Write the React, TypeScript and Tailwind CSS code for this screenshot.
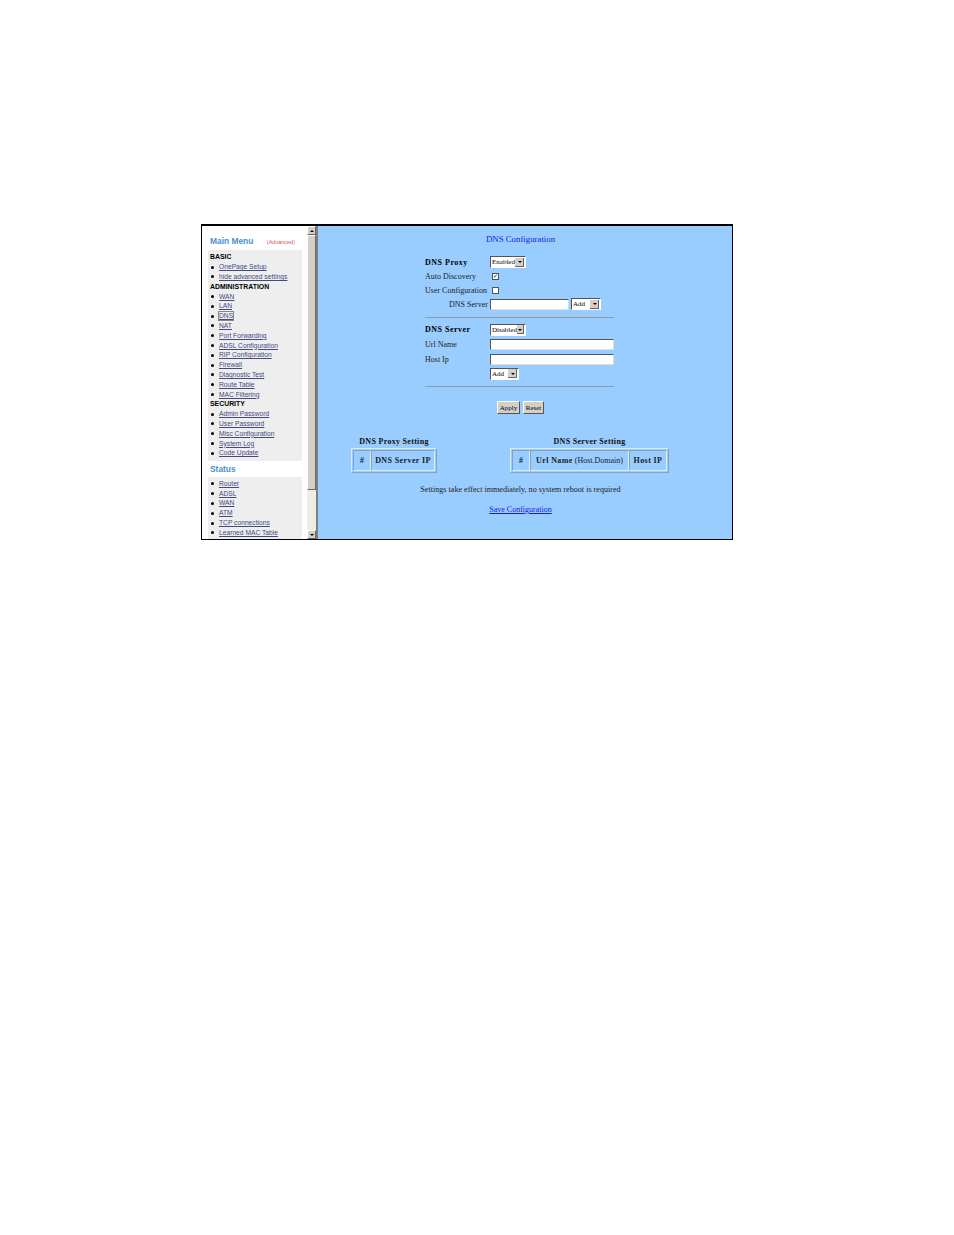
const serif = { fontFamily: '"Liberation Serif", serif' };

const Item = ({ label, boxed }: { label: string; boxed?: boolean }) => (
  <div className="flex h-[9.8px] items-center pl-[1px]">
    <span className="h-[3px] w-[3px] shrink-0 rounded-full bg-black" />
    <a className={`ml-[5px] whitespace-nowrap text-[6.7px] leading-[8px] text-[#44497f] underline ${boxed ? 'outline outline-1 outline-[#888]' : ''}`}>
      {label}
    </a>
  </div>
);

const Heading = ({ label }: { label: string }) => (
  <div className="flex h-[9.8px] items-center text-[6.9px] font-bold leading-[8px] text-black">{label}</div>
);

const Select = ({ label, width }: { label: string; width: string }) => (
  <div className={`flex h-[12px] items-center justify-between border border-t-[#555] border-l-[#555] border-r-white border-b-white bg-white pl-[1px] pr-[1px] ${width}`}>
    <span className="text-[7px] leading-[8px] text-black">{label}</span>
    <span className="flex h-[9px] w-[9px] items-center justify-center bg-[#d4d0c8] shadow-[inset_-1px_-1px_0_#666]">
      <span className="h-0 w-0 border-x-[2px] border-t-[2px] border-x-transparent border-t-black" />
    </span>
  </div>
);

const Input = ({ width }: { width: string }) => (
  <div className={`h-[11px] border border-t-[#555] border-l-[#555] border-r-[#ddd] border-b-[#ddd] bg-white ${width}`} />
);

const Cell = ({ children, width }: { children: React.ReactNode; width: string }) => (
  <div className={`flex h-[21px] items-center justify-center whitespace-nowrap border border-t-[#8aa0b8] border-l-[#8aa0b8] border-r-[#d8ecff] border-b-[#d8ecff] text-[8px] leading-[9px] text-[#222] ${width}`}>
    {children}
  </div>
);

const FormRow = ({ label, bold, indent, height, children }: { label: string; bold?: boolean; indent?: boolean; height: string; children: React.ReactNode }) => (
  <div className={`flex items-center ${height}`}>
    <div className={`w-[65px] shrink-0 whitespace-nowrap text-[8px] leading-[9px] text-[#222] ${bold ? 'font-bold tracking-[0.5px] text-black' : ''} ${indent ? 'pl-[24px]' : ''}`}>
      {label}
    </div>
    {children}
  </div>
);

const Button = ({ label, width }: { label: string; width: string }) => (
  <div className={`flex h-[13px] items-center justify-center border border-t-white border-l-white border-r-[#555] border-b-[#555] bg-[#d4d0c8] text-[7px] leading-[8px] text-black ${width}`}>
    {label}
  </div>
);

export default function App() {
  return (
    <div className="min-h-[1235px] bg-white pl-[201px] pt-[224px]">
      <div className="flex h-[316px] w-[532px] border border-t-2 border-black">
        {/* left menu frame */}
        <div className="w-[105px] shrink-0 overflow-hidden bg-white pl-[6px] pr-[5px]" style={{ fontFamily: '"Liberation Sans", sans-serif' }}>
          <div className="flex h-[24px] items-end justify-between pb-[4px] pl-[2px] pr-[7px]">
            <span className="text-[8.4px] font-bold leading-[10px] text-[#4a90d0]">Main Menu</span>
            <span className="text-[5.5px] leading-[7px] text-[#e05050]">(Advanced)</span>
          </div>
          <div className="h-[211px] bg-[#eeeeee] pl-[2px] pt-[2.5px]">
            <Heading label="BASIC" />
            <Item label="OnePage Setup" />
            <Item label="hide advanced settings" />
            <Heading label="ADMINISTRATION" />
            <Item label="WAN" />
            <Item label="LAN" />
            <Item label="DNS" boxed />
            <Item label="NAT" />
            <Item label="Port Forwarding" />
            <Item label="ADSL Configuration" />
            <Item label="RIP Configuration" />
            <Item label="Firewall" />
            <Item label="Diagnostic Test" />
            <Item label="Route Table" />
            <Item label="MAC Filtering" />
            <Heading label="SECURITY" />
            <Item label="Admin Password" />
            <Item label="User Password" />
            <Item label="Misc Configuration" />
            <Item label="System Log" />
            <Item label="Code Update" />
          </div>
          <div className="flex h-[16px] items-center pl-[2px] text-[8.4px] font-bold leading-[10px] text-[#4a90d0]">Status</div>
          <div className="h-[63px] bg-[#eeeeee] pl-[2px] pt-[2px]">
            <Item label="Router" />
            <Item label="ADSL" />
            <Item label="WAN" />
            <Item label="ATM" />
            <Item label="TCP connections" />
            <Item label="Learned MAC Table" />
          </div>
        </div>

        {/* scrollbar */}
        <div className="flex w-[9px] shrink-0 flex-col bg-[#eeece6]">
          <div className="flex h-[9px] items-center justify-center border border-t-white border-l-white border-r-[#666] border-b-[#666] bg-[#d4d0c8]">
            <span className="h-0 w-0 border-x-[2px] border-b-[2px] border-x-transparent border-b-black" />
          </div>
          <div className="h-[255px] border border-t-white border-l-white border-r-[#666] border-b-[#666] bg-[#d4d0c8]" />
          <div className="flex-1" />
          <div className="flex h-[9px] items-center justify-center border border-t-white border-l-white border-r-[#666] border-b-[#666] bg-[#d4d0c8]">
            <span className="h-0 w-0 border-x-[2px] border-t-[2px] border-x-transparent border-t-black" />
          </div>
        </div>
        <div className="w-[2px] shrink-0 bg-[#808080]" />

        {/* content frame */}
        <div className="flex-1 overflow-hidden bg-[#99ccff] pr-[9px]" style={serif}>
          <div className="flex h-[26px] items-center justify-center text-[8.8px] leading-[11px] text-[#1a1ae0]">DNS Configuration</div>

          <div className="ml-[107px] mt-[3px] w-[189px]">
            <FormRow label="DNS Proxy" bold height="h-[14px]">
              <Select label="Enabled" width="w-[36px]" />
            </FormRow>
            <FormRow label="Auto Discovery" height="h-[14px]">
              <div className="ml-[2px] flex h-[7px] w-[7px] items-center justify-center border border-[#555] bg-white text-[6px] leading-[6px] text-black">✓</div>
            </FormRow>
            <FormRow label="User Configuration" height="h-[14px]">
              <div className="ml-[2px] h-[7px] w-[7px] border border-[#555] bg-white" />
            </FormRow>
            <FormRow label="DNS Server" indent height="h-[14px]">
              <Input width="w-[79px]" />
              <div className="ml-[2px]">
                <Select label="Add" width="w-[30px]" />
              </div>
            </FormRow>
            <div className="mb-[4px] mt-[6px] h-px bg-[#9a9a9a]" />
            <FormRow label="DNS Server" bold height="h-[15px]">
              <Select label="Disabled" width="w-[36px]" />
            </FormRow>
            <FormRow label="Url Name" height="h-[15px]">
              <Input width="w-[124px]" />
            </FormRow>
            <FormRow label="Host Ip" height="h-[15px]">
              <Input width="w-[124px]" />
            </FormRow>
            <FormRow label="" height="h-[13px]">
              <Select label="Add" width="w-[29px]" />
            </FormRow>
            <div className="mt-[6px] h-px bg-[#9a9a9a]" />
            <div className="mt-[14px] flex justify-center gap-[3px] pl-[2px]">
              <Button label="Apply" width="w-[23px]" />
              <Button label="Reset" width="w-[21px]" />
            </div>
          </div>

          <div className="ml-[33px] mt-[21px] flex gap-[73px]">
            <div className="w-[86px]">
              <div className="flex h-[13px] items-start justify-center whitespace-nowrap pt-[1.5px] text-[8px] font-bold leading-[9px] tracking-[0.3px] text-[#111]">DNS Proxy Setting</div>
              <div className="flex border border-t-[#d8ecff] border-l-[#d8ecff] border-r-[#8aa0b8] border-b-[#8aa0b8] p-px">
                <Cell width="w-[18px]"><b>#</b></Cell>
                <Cell width="flex-1"><b className="tracking-[0.4px]">DNS Server IP</b></Cell>
              </div>
            </div>
            <div className="w-[159px]">
              <div className="flex h-[13px] items-start justify-center whitespace-nowrap pt-[1.5px] text-[8px] font-bold leading-[9px] tracking-[0.3px] text-[#111]">DNS Server Setting</div>
              <div className="flex border border-t-[#d8ecff] border-l-[#d8ecff] border-r-[#8aa0b8] border-b-[#8aa0b8] p-px">
                <Cell width="w-[18px]"><b>#</b></Cell>
                <Cell width="w-[99px]"><b className="tracking-[0.4px]">Url Name</b>&nbsp;(Host.Domain)</Cell>
                <Cell width="flex-1"><b className="tracking-[0.4px]">Host IP</b></Cell>
              </div>
            </div>
          </div>

          <div className="mt-[12px] text-center text-[8.15px] leading-[9px] text-[#222]">Settings take effect immediately, no system reboot is required</div>
          <div className="mt-[11px] text-center text-[8px] leading-[9px] text-[#1a1ae0] underline">Save Configuration</div>
        </div>
      </div>
    </div>
  );
}
